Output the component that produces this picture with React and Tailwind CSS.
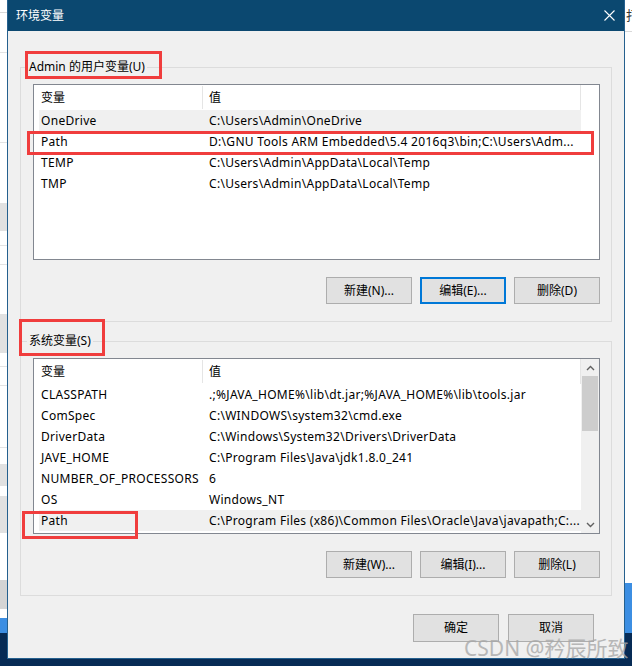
import React from 'react';

const USER_VARS = [
  { name: 'OneDrive', value: 'C:\\Users\\Admin\\OneDrive', hl: true },
  { name: 'Path', value: 'D:\\GNU Tools ARM Embedded\\5.4 2016q3\\bin;C:\\Users\\Adm...' },
  { name: 'TEMP', value: 'C:\\Users\\Admin\\AppData\\Local\\Temp' },
  { name: 'TMP', value: 'C:\\Users\\Admin\\AppData\\Local\\Temp' },
];

const SYS_VARS = [
  { name: 'CLASSPATH', value: '.;%JAVA_HOME%\\lib\\dt.jar;%JAVA_HOME%\\lib\\tools.jar' },
  { name: 'ComSpec', value: 'C:\\WINDOWS\\system32\\cmd.exe' },
  { name: 'DriverData', value: 'C:\\Windows\\System32\\Drivers\\DriverData' },
  { name: 'JAVE_HOME', value: 'C:\\Program Files\\Java\\jdk1.8.0_241' },
  { name: 'NUMBER_OF_PROCESSORS', value: '6' },
  { name: 'OS', value: 'Windows_NT' },
  { name: 'Path', value: 'C:\\Program Files (x86)\\Common Files\\Oracle\\Java\\javapath;C:...', hl: true },
];

// strips of the window behind the dialog (left edge), top to bottom
const LEFT_STRIP = [
  [12, '#ffffff'], [1, '#d9d9d9'], [39, '#ffffff'], [1, '#e3e3e3'], [89, '#ffffff'],
  [1, '#e3e3e3'], [60, '#ffffff'], [28, '#e1e1e1'], [14, '#ffffff'], [1, '#e3e3e3'],
  [18, '#ffffff'], [1, '#e3e3e3'], [49, '#ffffff'], [39, '#e1e1e1'], [13, '#ffffff'],
  [1, '#e3e3e3'], [18, '#ffffff'], [1, '#e3e3e3'], [61, '#ffffff'], [1, '#e3e3e3'],
  [16, '#ffffff'], [22, '#e1e1e1'], [10, '#ffffff'], [37, '#e1e1e1'], [47, '#ffffff'],
  [29, '#d4d4d4'], [9, '#ffffff'], [15, '#3c8ee2'],
];

function Chevron({ down }) {
  return (
    <svg width="9" height="6" viewBox="0 0 9 6">
      <polyline
        points={down ? '1,1 4.5,4.5 8,1' : '1,5 4.5,1.5 8,5'}
        fill="none"
        stroke="#606060"
        strokeWidth="1.4"
      />
    </svg>
  );
}

function Btn({ children, focus }) {
  return (
    <div
      className={
        focus
          ? 'w-[86px] h-full flex items-center justify-center bg-[#e1e1e1] border-2 border-[#0078d7] text-[12px]'
          : 'w-[86px] h-full flex items-center justify-center bg-[#e1e1e1] border border-[#adadad] text-[12px]'
      }
    >
      {children}
    </div>
  );
}

function VarList({ rows, scroll }) {
  return (
    <div className="h-[176px] border border-[#828790] bg-white flex">
      <div className="pl-[5px] flex flex-col">
        <div className="flex h-[25px] w-[542px]">
          <div className="w-[163px] pl-[2px] flex items-center">变量</div>
          <div className="w-px bg-[#e5e5e5] my-[1px]" />
          <div className="flex-1 pl-[6px] flex items-center border-r border-[#e5e5e5]">值</div>
        </div>
        {rows.map((r) => (
          <div
            key={r.name}
            className={r.hl ? 'flex h-[21px] w-[542px] items-center bg-[#f0f0f0]' : 'flex h-[21px] w-[542px] items-center'}
          >
            <div className="w-[164px] pl-[2px] tracking-[0.3px] whitespace-nowrap overflow-hidden">{r.name}</div>
            <div className="flex-1 pl-[6px] tracking-[0.3px] whitespace-nowrap overflow-hidden">{r.value}</div>
          </div>
        ))}
      </div>
      {scroll && (
        <div className="ml-auto w-[18px] h-full bg-[#f0f0f0] flex flex-col">
          <div className="h-[17px] flex items-center justify-center">
            <Chevron />
          </div>
          <div className="flex-1">
            <div className="mx-[1px] h-[55px] bg-[#cdcdcd]" />
          </div>
          <div className="h-[17px] flex items-center justify-center">
            <Chevron down />
          </div>
        </div>
      )}
    </div>
  );
}

function Group({ title, rows, scroll, buttons, className }) {
  return (
    <fieldset className={'border border-[#dcdcdc] pl-[6px] ' + className}>
      <legend className="px-[2px] text-[12px] leading-[16px]">{title}</legend>
      <div className="pl-[6px] pr-[11px] pt-[9px] pb-[17px]">
        <VarList rows={rows} scroll={scroll} />
        <div className="mt-[17px] h-[27px] flex justify-end gap-[8px]">
          <Btn>{buttons[0]}</Btn>
          <Btn focus={!scroll}>{buttons[1]}</Btn>
          <Btn>{buttons[2]}</Btn>
        </div>
      </div>
    </fieldset>
  );
}

export default function App() {
  return (
    <div className="relative w-[632px] h-[666px] overflow-hidden bg-[#072b55] text-black text-[12px] leading-[16px] font-['Noto_Sans','Noto_Sans_CJK_SC',sans-serif]">
      {/* background window, left edge */}
      <div className="absolute left-0 top-0 w-[7px] flex flex-col">
        {LEFT_STRIP.map(([h, c], i) => (
          <div key={i} style={{ height: h, backgroundColor: c }} />
        ))}
      </div>
      {/* background window, right edge */}
      <div className="absolute left-[625px] top-0 w-[7px] flex flex-col overflow-hidden">
        <div className="h-[31px] bg-white relative overflow-hidden">
          <span className="absolute left-[1px] top-[7px] text-[13px] text-[#333]">打</span>
        </div>
        <div className="h-px bg-[#d9d9d9]" />
        <div className="h-[551px] bg-white" />
        <div className="h-[50px] bg-[#3c8ee2]" />
      </div>

      {/* dialog */}
      <div className="absolute left-[7px] top-0 w-[618px] h-[659px] flex flex-col bg-[#f0f0f0] border-x border-b border-[#25608e]">
        <div className="h-[31px] shrink-0 bg-[#0b4870] flex items-center justify-between pl-[8px] pr-[9px] text-white">
          <span className="text-[12px]">环境变量</span>
          <svg width="11" height="11" viewBox="0 0 11 11">
            <path d="M0.5 0.5 L10.5 10.5 M10.5 0.5 L0.5 10.5" stroke="#ffffff" strokeWidth="1.1" />
          </svg>
        </div>
        <div className="flex-1 flex flex-col px-[12px] pt-[28px]">
          <Group
            title="Admin 的用户变量(U)"
            rows={USER_VARS}
            buttons={['新建(N)...', '编辑(E)...', '删除(D)']}
          />
          <Group
            className="mt-[11px]"
            title="系统变量(S)"
            rows={SYS_VARS}
            scroll
            buttons={['新建(W)...', '编辑(I)...', '删除(L)']}
          />
          <div className="mt-[18px] h-[28px] flex justify-end gap-[9px] pr-[18px]">
            <Btn>确定</Btn>
            <Btn>取消</Btn>
          </div>
        </div>
      </div>

      {/* red annotation boxes */}
      <div className="absolute left-[25px] top-[51px] w-[137px] h-[28px] border-[3px] border-[#f03d3d]" />
      <div className="absolute left-[27px] top-[131px] w-[567px] h-[24px] border-[3px] border-[#f03d3d]" />
      <div className="absolute left-[19px] top-[319px] w-[86px] h-[37px] border-[3px] border-[#f03d3d]" />
      <div className="absolute left-[22px] top-[511px] w-[116px] h-[28px] border-[3px] border-[#f03d3d]" />

      {/* watermark */}
      <div className="absolute left-[464px] top-[635px] text-[21px] leading-[26px] text-[#a9a9a9] opacity-80 whitespace-nowrap">
        CSDN @矜辰所致
      </div>
    </div>
  );
}
